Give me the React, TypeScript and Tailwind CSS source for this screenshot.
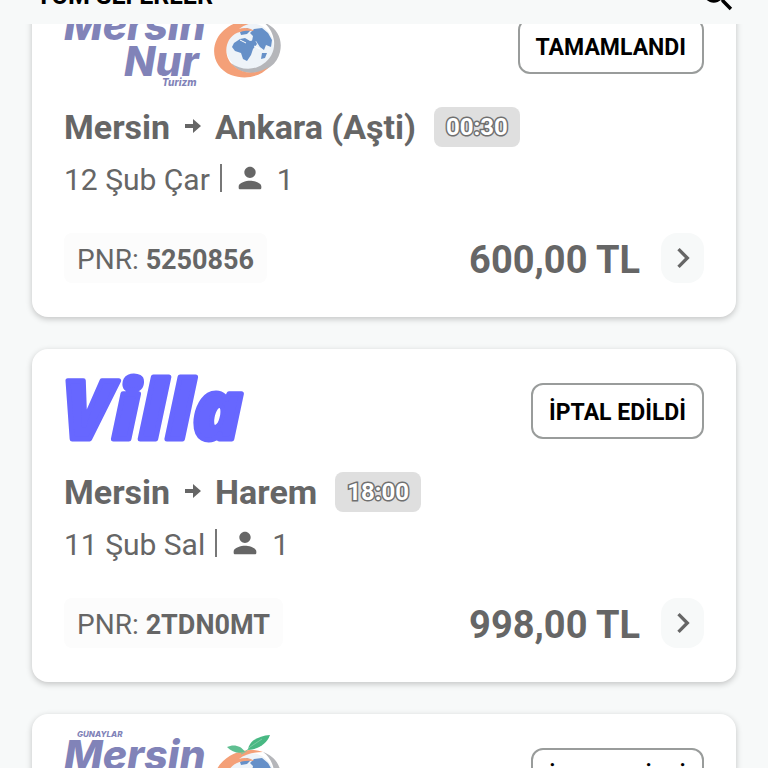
import React from "react";

type Company = "mersin-nur" | "villa";

interface Trip {
  id: number;
  company: Company;
  status: string;
  from: string;
  to: string;
  time: string;
  date: string;
  passengers: number;
  pnr: string;
  price: string;
}

const trips: Trip[] = [
  { id: 1, company: "mersin-nur", status: "TAMAMLANDI", from: "Mersin", to: "Ankara (Aşti)", time: "00:30", date: "12 Şub Çar", passengers: 1, pnr: "5250856", price: "600,00 TL" },
  { id: 2, company: "villa", status: "İPTAL EDİLDİ", from: "Mersin", to: "Harem", time: "18:00", date: "11 Şub Sal", passengers: 1, pnr: "2TDN0MT", price: "998,00 TL" },
  { id: 3, company: "mersin-nur", status: "İPTAL EDİLDİ", from: "Mersin", to: "Harem", time: "18:00", date: "11 Şub Sal", passengers: 1, pnr: "5250412", price: "950,00 TL" },
];

function MersinNurLogo() {
  return (
    <svg role="img" aria-label="Mersin Nur Turizm" width="220" height="92" viewBox="0 0 220 92" className="shrink-0">
      <g fill="#8183b8" className="font-[Inter,sans-serif] font-extrabold italic">
        <text x="13" y="7" fontSize="8">GÜNAYLAR</text>
        <text x="0" y="40" fontSize="41">Mersin</text>
        <text x="60" y="76" fontSize="41">Nur</text>
        <text x="98" y="86" fontSize="10">Turizm</text>
      </g>
      <circle cx="186" cy="47" r="24" fill="#eef3f8" />
      <g fill="#6690c8">
        <path d="M170 43l6-4 5-1 5 3 5-1 2 4-4 5-2 6-4 6-4-2-2-6-6-2-3-4z" />
        <path d="M190 29l8-1 6 5 4 7-1 7-5-2-2 5-4-3-4-6-4 0 1-5-3-3z" />
        <path d="M176 32l7-4 4 2-4 4-6 1z" />
        <path d="M198 53l5 0-2 5-4 1z" />
      </g>
      <path d="M176 40l6 3M190 46l6 3" stroke="#fff" strokeWidth="1" />
      <path d="M199 22C213 27 219 39 216 52c-3 13-15 21-29 21-9 0-16-4-20-10 9 7 23 8 32 1 8-5 12-14 11-23-1-8-5-15-11-19z" fill="#b5b6ba" />
      <path d="M199 22C182 16 161 24 153 39c-7 14-1 30 14 36 14 5 29 2 38-8-11 7-25 8-34 0-9-7-11-18-6-27 5-8 14-10 25-9-3-3-10-4-15-2 6-5 15-7 24-7z" fill="#f4a078" />
      <path d="M163 17c6-3 14-2 18 5-7 2-13 0-18-5z" fill="#5fbf91" />
      <path d="M184 20c1-9 10-14 22-15-3 8-10 14-22 15z" fill="#48b883" />
      <path d="M177 24c3-1 6-3 9-7l12-8" fill="none" stroke="#7bcaa3" strokeWidth="1" />
    </svg>
  );
}

function VillaLogo() {
  return (
    <svg role="img" aria-label="Villa" width="220" height="92" viewBox="0 0 220 92" className="shrink-0">
      <text x="-2" y="74" fontSize="82" fill="#6767ff" stroke="#6767ff" strokeWidth="5" strokeLinejoin="round" className="font-['Open_Sans',sans-serif] font-extrabold italic">
        Villa
      </text>
    </svg>
  );
}

function PersonIcon() {
  return (
    <svg aria-hidden="true" viewBox="0 0 24 24" fill="currentColor" className="mb-1 size-[34px]">
      <path d="M12 12c2.21 0 4-1.79 4-4s-1.79-4-4-4-4 1.79-4 4 1.79 4 4 4zm0 2c-2.67 0-8 1.34-8 4v1c0 .55.45 1 1 1h14c.55 0 1-.45 1-1v-1c0-2.66-5.33-4-8-4z" />
    </svg>
  );
}

function TripCard({ trip }: { trip: Trip }) {
  return (
    <article className="rounded-2xl bg-white px-8 pt-4 pb-[34px] shadow-[0_2px_6px_rgba(0,0,0,0.22)]">
      <div className="flex h-[92px] items-center justify-between">
        {trip.company === "villa" ? <VillaLogo /> : <MersinNurLogo />}
        <button type="button" className="h-14 rounded-xl border-2 border-[#999c9b] px-4 pt-1 text-[23px] font-bold whitespace-nowrap text-black">
          {trip.status}
        </button>
      </div>

      <div className="mt-[15px] flex h-10 items-center">
        <h2 className="flex items-center gap-3.5 text-[34px] leading-10 font-bold whitespace-nowrap">
          <span>{trip.from}</span>
          <svg aria-hidden="true" width="17" height="14" viewBox="0 0 17 14" fill="currentColor" className="mb-0.5">
            <path d="M1 5h8V0l8 7-8 7V9H1z" />
          </svg>
          <span>{trip.to}</span>
        </h2>
        <time className="ml-[18px] rounded-lg bg-[#dfdfdf] px-3 text-2xl leading-10 font-bold text-white [-webkit-text-stroke:3px_#707070] [paint-order:stroke]">
          {trip.time}
        </time>
      </div>

      <div className="mt-[17px] flex h-8 items-center text-[30px] leading-8">
        <span>{trip.date}</span>
        <span className="mb-1 ml-2.5 h-7 w-0.5 bg-[#777]" />
        <span className="ml-[11px] flex items-center gap-2.5">
          <PersonIcon />
          <span>{trip.passengers}</span>
        </span>
      </div>

      <div className="mt-[37px] flex h-[50px] items-center">
        <p className="h-[50px] rounded-lg bg-[#fcfcfc] px-[13px] pt-0.5 text-[28px] leading-[50px] whitespace-nowrap">
          PNR: <strong className="text-[27px] font-bold">{trip.pnr}</strong>
        </p>
        <strong className="ml-auto h-[50px] pt-0.5 text-[38px] leading-[50px] font-bold whitespace-nowrap">{trip.price}</strong>
        <button type="button" aria-label="Sefer detayı" className="ml-[21px] flex h-[50px] w-[43px] items-center justify-center rounded-2xl bg-[#f7f9f9]">
          <svg aria-hidden="true" viewBox="0 0 24 24" fill="currentColor" className="size-10 shrink-0">
            <path d="M10 6 8.59 7.41 13.17 12l-4.58 4.59L10 18l6-6z" />
          </svg>
        </button>
      </div>
    </article>
  );
}

export default function App() {
  return (
    <div className="flex h-screen flex-col overflow-hidden bg-[#f7f9f9] font-[Roboto,sans-serif] text-[#666]">
      <header className="-mt-8 flex h-14 shrink-0 items-center justify-between pr-[30px] pl-9 text-black">
        <h1 className="text-[25px] font-bold">TÜM SEFERLER</h1>
        <button type="button" aria-label="Ara">
          <svg aria-hidden="true" viewBox="0 0 24 24" fill="currentColor" className="size-10">
            <path d="M15.5 14h-.79l-.28-.27C15.41 12.59 16 11.11 16 9.5 16 5.91 13.09 3 9.5 3S3 5.91 3 9.5 5.91 16 9.5 16c1.61 0 3.09-.59 4.23-1.57l.27.28v.79l5 4.99L20.49 19l-4.99-5zm-6 0C7.01 14 5 11.99 5 9.5S7.01 5 9.5 5 14 7.01 14 9.5 11.99 14 9.5 14z" />
          </svg>
        </button>
      </header>
      <main className="min-h-0 flex-1 overflow-hidden px-8">
        <div className="-mt-10 flex flex-col gap-8">
          {trips.map((trip) => (
            <TripCard key={trip.id} trip={trip} />
          ))}
        </div>
      </main>
    </div>
  );
}
